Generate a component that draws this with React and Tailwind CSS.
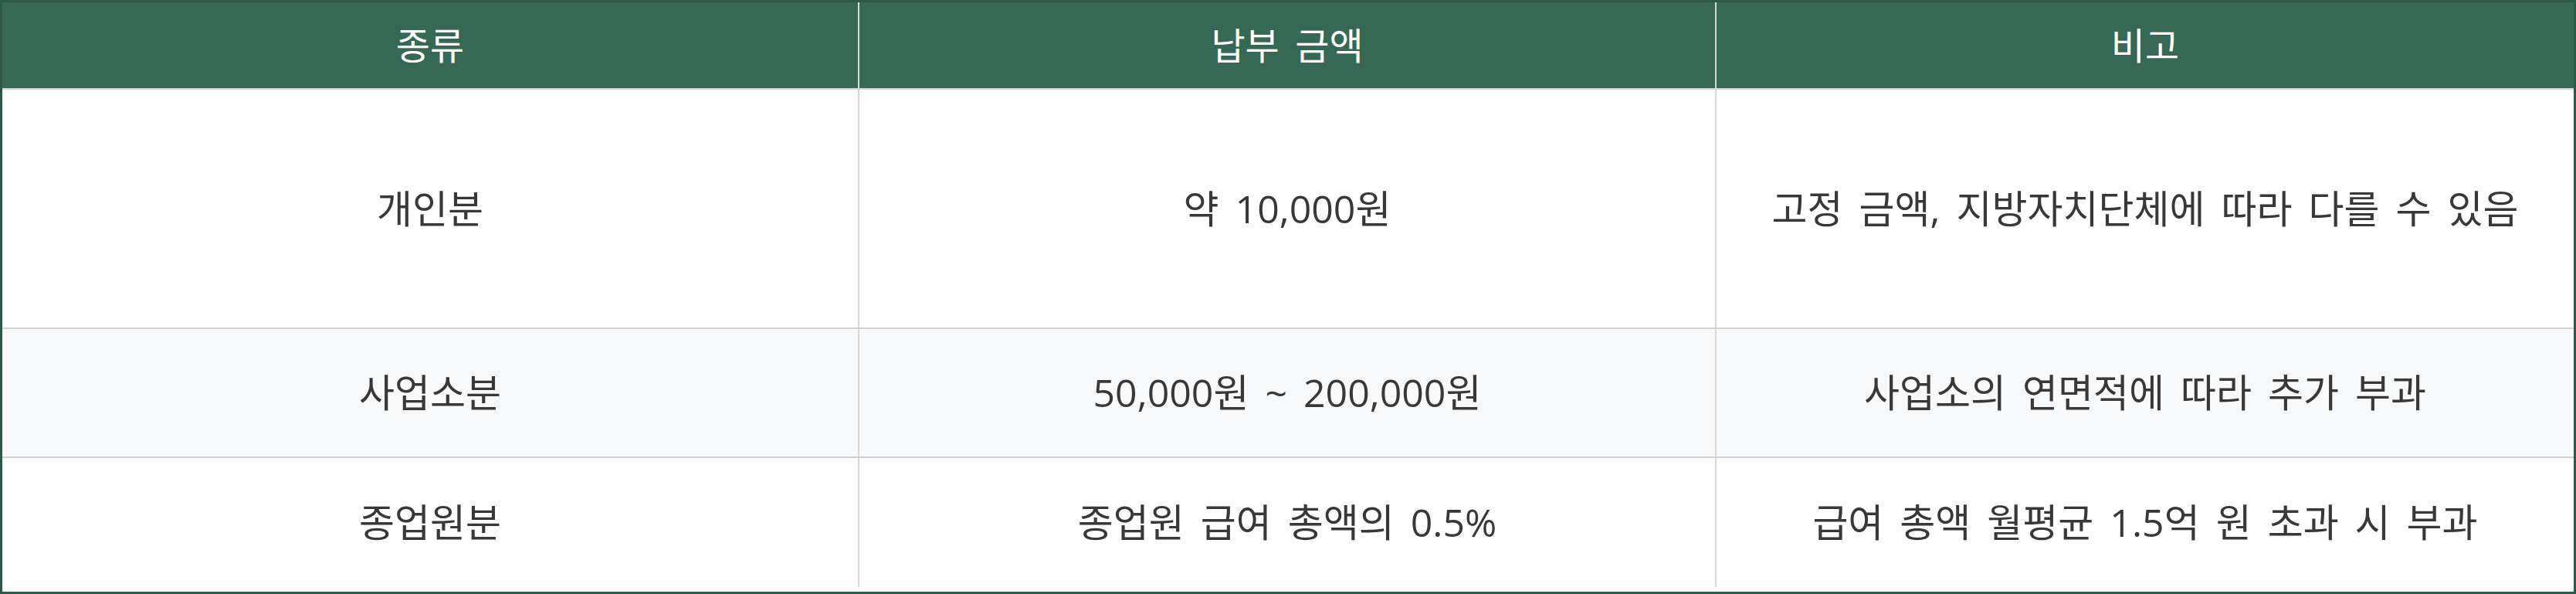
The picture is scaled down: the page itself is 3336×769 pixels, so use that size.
const rows = [
  { kind: "개인분", amount: "약 10,000원", note: "고정 금액, 지방자치단체에 따라 다를 수 있음", h: "h-[310px]", bg: "bg-white" },
  { kind: "사업소분", amount: "50,000원 ~ 200,000원", note: "사업소의 연면적에 따라 추가 부과", h: "h-[167px]", bg: "bg-[#f7f8f9]" },
  { kind: "종업원분", amount: "종업원 급여 총액의 0.5%", note: "급여 총액 월평균 1.5억 원 초과 시 부과", h: "h-[167px]", bg: "bg-white" }
];

export default function App() {
  return (
    <div
      className="h-[769px] w-[3336px] overflow-hidden border-[3px] border-[#2d5a48] bg-white text-[50px] text-[#383838] [word-spacing:8px]"
      style={{ fontFamily: '"Open Sans", "Noto Sans CJK KR", sans-serif' }}
    >
      <div className="grid h-[113px] grid-cols-3 border-b-2 border-[#cfd3d1] bg-[#356855] text-[48px] text-white">
        <div className="flex items-center justify-center border-r-2 border-[#d4dbd7]">종류</div>
        <div className="flex items-center justify-center border-r-2 border-[#d4dbd7]">납부 금액</div>
        <div className="flex items-center justify-center">비고</div>
      </div>
      {rows.map((row, i) => (
        <div
          key={row.kind}
          className={`grid grid-cols-3 ${row.h} ${row.bg} ${i < rows.length - 1 ? "border-b-2 border-[#d2d2d2]" : ""}`}
        >
          <div className="flex items-center justify-center border-r-2 border-[#d8d8d8]">{row.kind}</div>
          <div className="flex items-center justify-center border-r-2 border-[#d8d8d8]">{row.amount}</div>
          <div className="flex items-center justify-center">{row.note}</div>
        </div>
      ))}
    </div>
  );
}
